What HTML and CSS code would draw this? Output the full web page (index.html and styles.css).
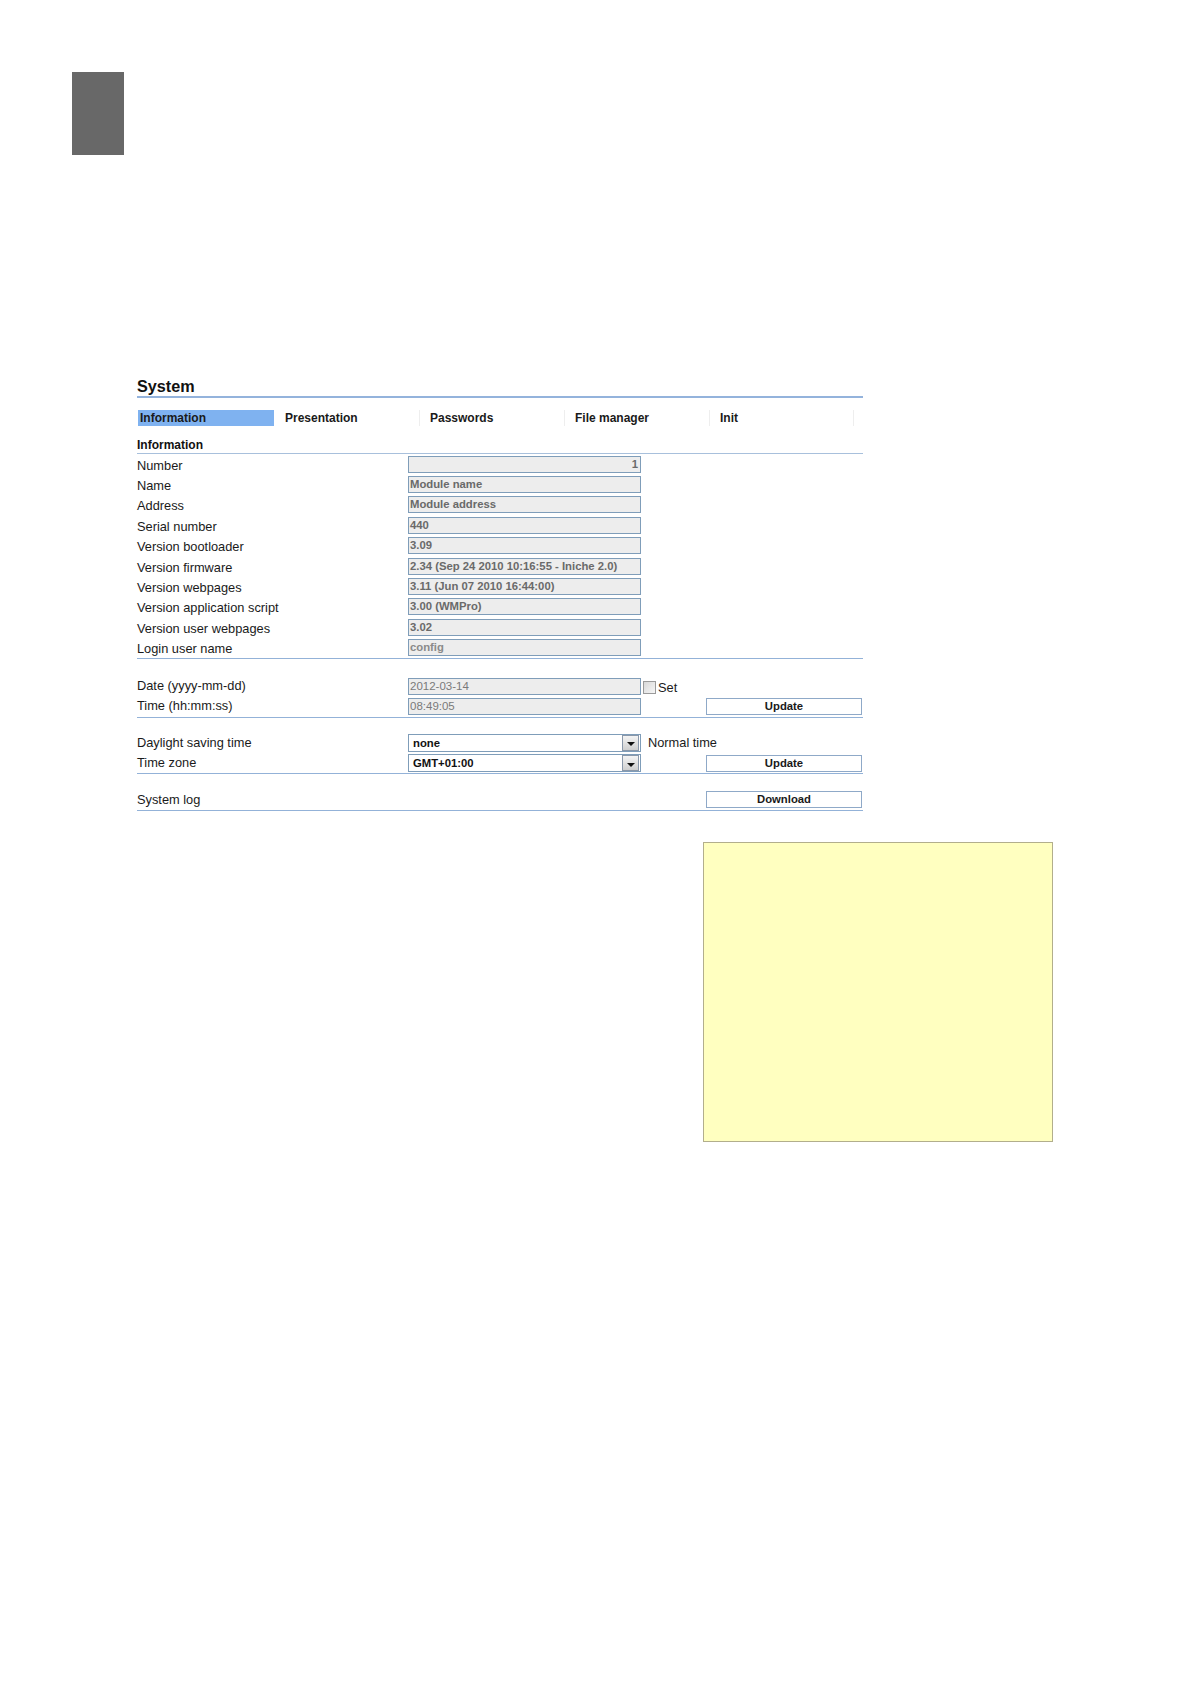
FILE: index.html
```html
<!DOCTYPE html>
<html>
<head>
<meta charset="utf-8">
<title>System</title>
<link rel="stylesheet" href="styles.css">
</head>
<body>
<div class="page">
  <div class="marker"></div>

  <div class="system">
    <div class="title">System</div>

    <div class="tabs">
      <div class="tab tab-active">Information</div>
      <div class="tab">Presentation</div>
      <div class="tab">Passwords</div>
      <div class="tab">File manager</div>
      <div class="tab">Init</div>
    </div>

    <div class="group group-first">
      <div class="group-head">Information</div>
      <div class="row"><span class="label">Number</span><div class="field field-right">1</div></div>
      <div class="row"><span class="label">Name</span><div class="field">Module name</div></div>
      <div class="row"><span class="label">Address</span><div class="field">Module address</div></div>
      <div class="row"><span class="label">Serial number</span><div class="field">440</div></div>
      <div class="row"><span class="label">Version bootloader</span><div class="field">3.09</div></div>
      <div class="row"><span class="label">Version firmware</span><div class="field">2.34 (Sep 24 2010 10:16:55 - Iniche 2.0)</div></div>
      <div class="row"><span class="label">Version webpages</span><div class="field">3.11 (Jun 07 2010 16:44:00)</div></div>
      <div class="row"><span class="label">Version application script</span><div class="field">3.00 (WMPro)</div></div>
      <div class="row"><span class="label">Version user webpages</span><div class="field">3.02</div></div>
      <div class="row"><span class="label">Login user name</span><div class="field field-light">config</div></div>
    </div>

    <div class="group">
      <div class="row">
        <span class="label">Date (yyyy-mm-dd)</span>
        <div class="field field-thin">2012-03-14</div>
        <div class="check-wrap"><span class="checkbox"></span><span class="check-text">Set</span></div>
      </div>
      <div class="row">
        <span class="label">Time (hh:mm:ss)</span>
        <div class="field field-thin">08:49:05</div>
        <span class="spacer"></span>
        <div class="button">Update</div>
      </div>
    </div>

    <div class="group group-tight">
      <div class="row">
        <span class="label">Daylight saving time</span>
        <div class="select"><span class="select-text">none</span><span class="select-arrow"><span class="tri"></span></span></div>
        <span class="aside">Normal time</span>
      </div>
      <div class="row">
        <span class="label">Time zone</span>
        <div class="select"><span class="select-text">GMT+01:00</span><span class="select-arrow"><span class="tri"></span></span></div>
        <span class="spacer"></span>
        <div class="button">Update</div>
      </div>
    </div>

    <div class="group group-tight">
      <div class="row">
        <span class="label">System log</span>
        <span class="spacer"></span>
        <span class="spacer"></span>
        <div class="button">Download</div>
      </div>
    </div>
  </div>

  <div class="note"></div>
</div>
</body>
</html>
```

FILE: styles.css
```css
html, body {
  margin: 0;
  padding: 0;
  background: #ffffff;
}

body {
  font-family: "Liberation Sans", Arial, sans-serif;
  color: #111111;
}

.page {
  padding-top: 72px;
  padding-bottom: 40px;
}

.marker {
  margin-left: 72px;
  width: 52px;
  height: 83px;
  background: #686868;
}

.system {
  margin-top: 222px;
  margin-left: 137px;
  width: 726px;
}

.title {
  font-size: 16.2px;
  font-weight: bold;
  line-height: 18px;
  padding-bottom: 1px;
  border-bottom: 2px solid #94b3dc;
  color: #111;
}

.tabs {
  display: flex;
  margin-top: 12px;
  margin-left: 1px;
  height: 16px;
}

.tab {
  width: 134px;
  padding-left: 10px;
  font-size: 12px;
  font-weight: bold;
  line-height: 16px;
  color: #1a1a1a;
  border-right: 1px solid #eeeeee;
}

.tab-active {
  width: 134px;
  padding-left: 2px;
  background: #7fb2f0;
  border-right: 1px solid #ffffff;
}

.tab:last-child {
  width: 133px;
}

.group {
  border-bottom: 1px solid #93b2d8;
  margin-top: 17px;
}

.group-first {
  margin-top: 11px;
}

.group-first .label {
  margin-top: 3px;
}

.group-tight {
  margin-top: 15px;
}

.group-head {
  font-size: 12px;
  font-weight: bold;
  line-height: 16px;
  border-bottom: 1px solid #a8c0dc;
  color: #111;
}

.group-first .group-head .label {
  margin-top: 0;
}

.row {
  display: grid;
  grid-template-columns: 271px 233px 65px 156px;
  align-items: center;
  height: 20.4px;
}

.label {
  font-size: 12.8px;
  line-height: 16px;
  color: #1a1a1a;
}

.field {
  box-sizing: border-box;
  height: 17px;
  border: 1px solid #7f9db9;
  background: #ededed;
  padding: 0 2px 0 1px;
  font-size: 11.3px;
  font-weight: bold;
  line-height: 15px;
  color: #6a6a6a;
  white-space: nowrap;
  overflow: hidden;
}

.field-right {
  text-align: right;
}

.field-light {
  color: #8a8a8a;
}

.field-thin {
  font-weight: normal;
  color: #7a7a7a;
  font-size: 11.5px;
}

.check-wrap {
  display: flex;
  align-items: center;
  padding-left: 2px;
  margin-top: 3px;
}

.checkbox {
  box-sizing: border-box;
  width: 13px;
  height: 13px;
  border: 1px solid #9a9a9a;
  background: linear-gradient(135deg, #d8d8d8, #f6f6f6);
}

.check-text {
  margin-left: 2px;
  font-size: 12.8px;
  color: #1a1a1a;
}

.spacer {
  display: block;
}

.button {
  box-sizing: border-box;
  height: 17px;
  border: 1px solid #8fa9c8;
  background: #ffffff;
  text-align: center;
  font-size: 11.3px;
  font-weight: bold;
  line-height: 15px;
  color: #1a1a1a;
}

.select {
  box-sizing: border-box;
  height: 18px;
  border: 1px solid #7f9db9;
  background: #ffffff;
  display: flex;
  align-items: center;
  justify-content: space-between;
  padding-right: 1px;
}

.select-text {
  padding-left: 4px;
  font-size: 11.3px;
  font-weight: bold;
  color: #111;
}

.select-arrow {
  box-sizing: border-box;
  width: 17px;
  height: 16px;
  border: 1px solid #8a98aa;
  background: linear-gradient(#f4f4f4, #cfcfcf);
  display: flex;
  align-items: center;
  justify-content: center;
}

.tri {
  width: 0;
  height: 0;
  margin-top: 3px;
  border-left: 4px solid transparent;
  border-right: 4px solid transparent;
  border-top: 4px solid #111;
}

.aside {
  padding-left: 7px;
  font-size: 12.8px;
  color: #1a1a1a;
  white-space: nowrap;
}

.note {
  margin-top: 31px;
  margin-left: 703px;
  width: 348px;
  height: 298px;
  border: 1px solid #b2ae8c;
  background: #ffffc0;
}
```
